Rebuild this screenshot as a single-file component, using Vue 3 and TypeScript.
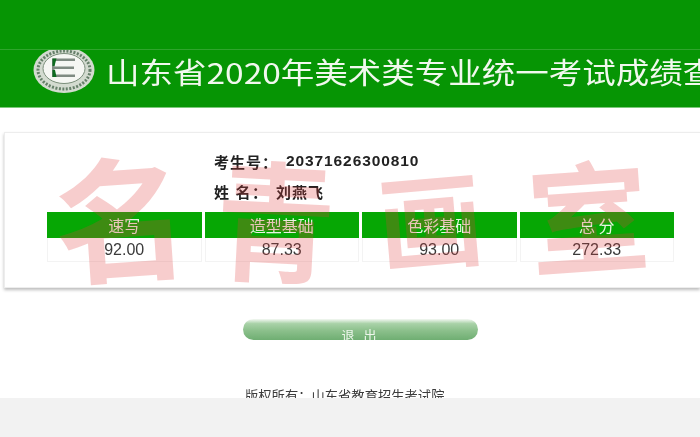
<script setup lang="ts">
interface Score { name: string; value: string }
const scores: Score[] = [
  { name: '速写', value: '92.00' },
  { name: '造型基础', value: '87.33' },
  { name: '色彩基础', value: '93.00' },
  { name: '总 分', value: '272.33' },
]
const marks: { ch: string; cls: string }[] = [
  { ch: '名', cls: 'm1' },
  { ch: '青', cls: 'm2' },
  { ch: '画', cls: 'm3' },
  { ch: '室', cls: 'm4' },
]
</script>

<template>
  <div class="page">
    <div class="content">
      <header class="head">
        <div class="head-top"></div>
        <div class="head-main">
          <svg class="logo" width="62" height="44" viewBox="0 0 62 44">
            <ellipse cx="31" cy="20" rx="30.5" ry="23" fill="#d3dbd0" />
            <ellipse cx="31" cy="20" rx="26" ry="19" fill="none" stroke="#66806a" stroke-width="3" stroke-dasharray="2 1.5" />
            <ellipse cx="31" cy="18.5" rx="21" ry="15" fill="#f5f7f3" stroke="#7b8f7b" stroke-width="1" />
            <path d="M19 8.5H42V11H21.5V16.5H41V19H21.5V24.5H42V27H19Z" fill="#7f8b82" />
            <path d="M19.5 8.5H23.5L21.5 16H19.5ZM19.5 20H22L23.5 27H19.5Z" fill="#0d6b1f" />
          </svg>
          <h1 class="title">山东省2020年美术类专业统一考试成绩查询</h1>
        </div>
      </header>

      <section class="card">
        <div class="info">
          <div class="info-row"><b>考生号：</b><span class="num">20371626300810</span></div>
          <div class="info-row"><b class="label-name">姓 名：</b><span class="person">刘燕飞</span></div>
        </div>
        <div class="table">
          <div v-for="s in scores" :key="s.name" class="col">
            <div class="th">{{ s.name }}</div>
            <div class="td">{{ s.value }}</div>
          </div>
        </div>
      </section>

      <div class="btn"><span class="btn-label">退 出</span></div>

      <div class="copy">版权所有：山东省教育招生考试院</div>
    </div>
    <div class="band"></div>

    <div v-for="m in marks" :key="m.ch" class="mark" :class="m.cls">{{ m.ch }}</div>
  </div>
</template>

<style>
html, body { margin: 0; background: #fff; }
</style>

<style scoped>
.page {
  position: relative;
  width: 700px;
  height: 437px;
  overflow: hidden;
  display: flex;
  flex-direction: column;
  background: #fff;
  font-family: "Noto Sans CJK SC", "Liberation Sans", sans-serif;
}
.content {
  height: 398px;
  overflow: hidden;
  flex: none;
}
.band {
  flex: 1;
  background: #f2f2f2;
}
.head {
  height: 107px;
  background: #069504;
  border-bottom: 1px solid #7cc97a;
}
.head-top {
  height: 49px;
  border-bottom: 1px solid #2fa52c;
}
.head-main {
  display: flex;
  align-items: flex-start;
  height: 57px;
  padding-left: 33px;
  overflow: hidden;
}
.logo { flex: none; display: block; }
.title {
  margin: 0 0 0 11px;
  font-family: "Noto Sans CJK SC", sans-serif;
  font-weight: 400;
  font-size: 29px;
  line-height: 42px;
  color: #f1f8ee;
  white-space: nowrap;
  transform: scaleX(1.155);
  transform-origin: left center;
  filter: blur(0.4px);
}
.card {
  margin: 24px 0 0 4px;
  height: 156px;
  background: #fff;
  border: 1px solid #ededed;
  border-right: none;
  box-shadow: 0 2px 3px #bdbdbd;
  box-sizing: border-box;
  padding: 18px 0 0 42px;
}
.info {
  padding-left: 167px;
  display: flex;
  flex-direction: column;
  gap: 10px;
  height: 61px;
  filter: blur(0.35px);
}
.info-row {
  display: flex;
  align-items: center;
  height: 20px;
  font-size: 15px;
  color: #222;
  white-space: nowrap;
}
.info-row b { width: 72px; font-weight: 700; letter-spacing: 1px; }
.info-row .label-name { width: 62px; letter-spacing: 1.5px; }
.num {
  font-family: "Liberation Sans", sans-serif;
  font-size: 15.5px;
  font-weight: 700;
  letter-spacing: 0.9px;
}
.person { font-weight: 700; letter-spacing: 1px; }
.table {
  display: flex;
  gap: 3px;
}
.col { width: 154.5px; }
.th {
  height: 26px;
  background: #06a704;
  color: #e9f5e2;
  font-size: 16px;
  line-height: 26px;
  text-align: center;
  filter: blur(0.3px);
}
.td {
  height: 24px;
  border: 1px solid #f3f3f3;
  border-top: none;
  box-sizing: border-box;
  text-align: center;
  font-family: "Liberation Sans", sans-serif;
  font-size: 16px;
  line-height: 24px;
  color: #3a3a3a;
  filter: blur(0.3px);
}
.btn {
  margin: 31px 0 0 243px;
  width: 235px;
  height: 21px;
  border-radius: 11px;
  background: linear-gradient(#f4f8f3 0%, #a9d2a8 22%, #8cc08c 55%, #6fae72 100%);
  text-align: center;
  overflow: hidden;
  filter: blur(0.4px);
}
.btn-label {
  display: block;
  color: #eef6ec;
  font-size: 13px;
  line-height: 14px;
  padding-top: 9px;
  letter-spacing: 3px;
}
.copy {
  margin: 49px 0 0 245px;
  font-size: 13.3px;
  line-height: 14px;
  color: #3c3c3c;
  white-space: nowrap;
  filter: blur(0.35px);
}
.mark {
  position: absolute;
  font-family: "Noto Sans CJK SC", sans-serif;
  font-weight: 700;
  color: rgba(226, 62, 62, 0.26);
  line-height: 1;
  pointer-events: none;
}
.m1 { left: 54px; top: 146px; font-size: 134px; transform: rotate(-4deg); }
.m2 { left: 211px; top: 150px; font-size: 130px; transform: rotate(3deg) scaleX(0.92); }
.m3 { left: 378px; top: 164px; font-size: 104px; transform: rotate(-5deg); }
.m4 { left: 528px; top: 152px; font-size: 120px; transform: rotate(-4deg); }
</style>
